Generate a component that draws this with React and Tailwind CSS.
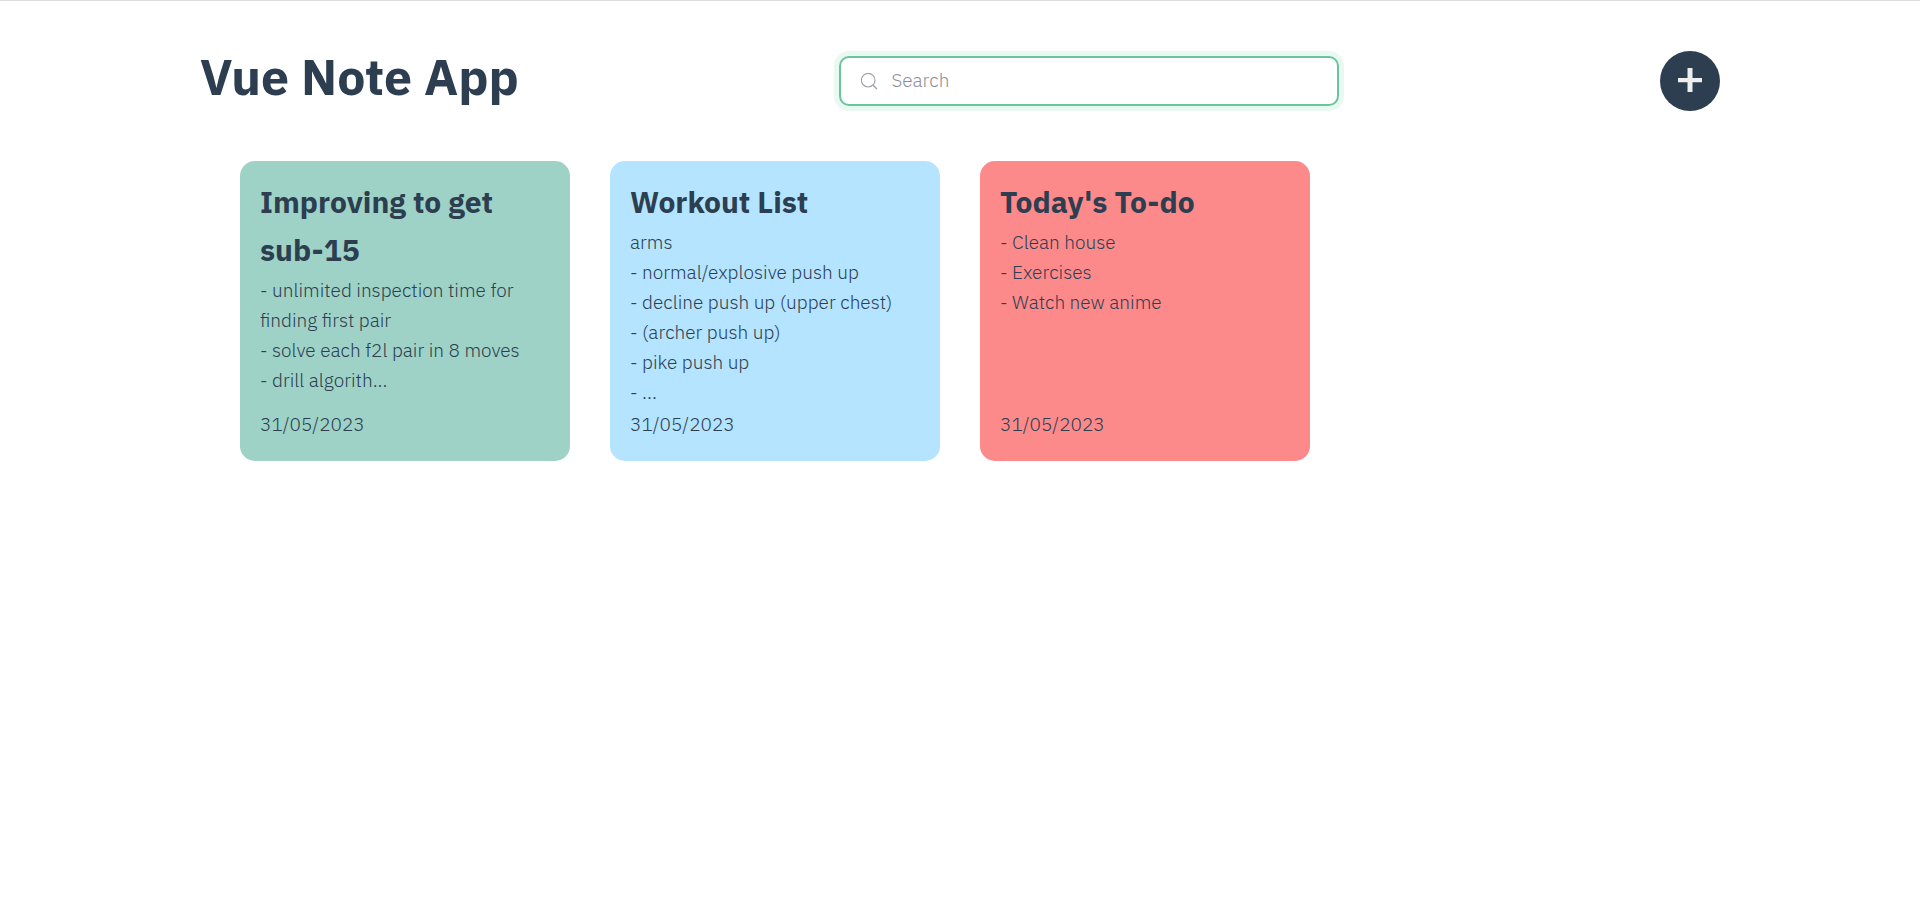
const notes = [
  {
    title: "Improving to get sub-15",
    body: "- unlimited inspection time for finding first pair\n- solve each f2l pair in 8 moves\n- drill algorith...",
    date: "31/05/2023",
    color: "bg-[#9ed2c6]",
  },
  {
    title: "Workout List",
    body: "arms\n- normal/explosive push up\n- decline push up (upper chest)\n- (archer push up)\n- pike push up\n- ...",
    date: "31/05/2023",
    color: "bg-[#b4e4ff]",
  },
  {
    title: "Today's To-do",
    body: "- Clean house\n- Exercises\n- Watch new anime",
    date: "31/05/2023",
    color: "bg-[#fd8a8a]",
  },
];

function SearchBox() {
  return (
    <label className="flex h-[50px] w-[500px] items-center gap-[13px] rounded-[10px] border-2 border-[#68c69d] bg-white px-5 ring-[5px] ring-[#eaf8f2]">
      <svg className="size-[17px] shrink-0" viewBox="0 0 17 17" fill="none" stroke="#9e9ea7" aria-hidden="true">
        <circle cx="7.2" cy="7.2" r="6.8" strokeWidth="1.1" />
        <path d="M12.2 12.2 L15.9 15.9" strokeWidth="1.4" />
      </svg>
      <input
        type="search"
        aria-label="Search"
        placeholder="Search"
        className="min-w-0 flex-1 bg-transparent pb-0.5 text-[19px] font-light outline-none placeholder:text-[#8e8e97]"
      />
    </label>
  );
}

function NoteCard({ title, body, date, color }) {
  return (
    <article className={`flex h-[300px] w-[330px] flex-col rounded-[15px] px-5 pt-[17px] pb-[22px] ${color}`}>
      <h2 className="mb-px text-[30px] leading-[48px] font-bold">{title}</h2>
      <p className="grow whitespace-pre-line">{body}</p>
      <time>{date}</time>
    </article>
  );
}

export default function App() {
  return (
    <div className="min-h-screen border-t border-[#dcdcdc] bg-white font-['IBM_Plex_Sans','Open_Sans',sans-serif] text-[19px] leading-[30px] font-light text-[#2c3e50]">
      <div className="mx-auto max-w-[1520px] py-[50px]">
        <header className="flex items-center justify-between">
          <h1 className="pb-2 text-[50px] leading-[52px] font-bold">Vue Note App</h1>
          <SearchBox />
          <button type="button" aria-label="Add note" className="flex size-[60px] items-center justify-center rounded-full bg-[#2c3e50] pb-0.5">
            <svg className="size-6" viewBox="0 0 24 24" aria-hidden="true">
              <path d="M9.5 0h5v10H24v4.3h-9.5V24h-5v-9.7H0V10h9.5z" fill="#eeeeee" />
            </svg>
          </button>
        </header>
        <main className="mt-[50px] flex flex-wrap gap-10 px-10">
          {notes.map((note) => (
            <NoteCard key={note.title} {...note} />
          ))}
        </main>
      </div>
    </div>
  );
}
